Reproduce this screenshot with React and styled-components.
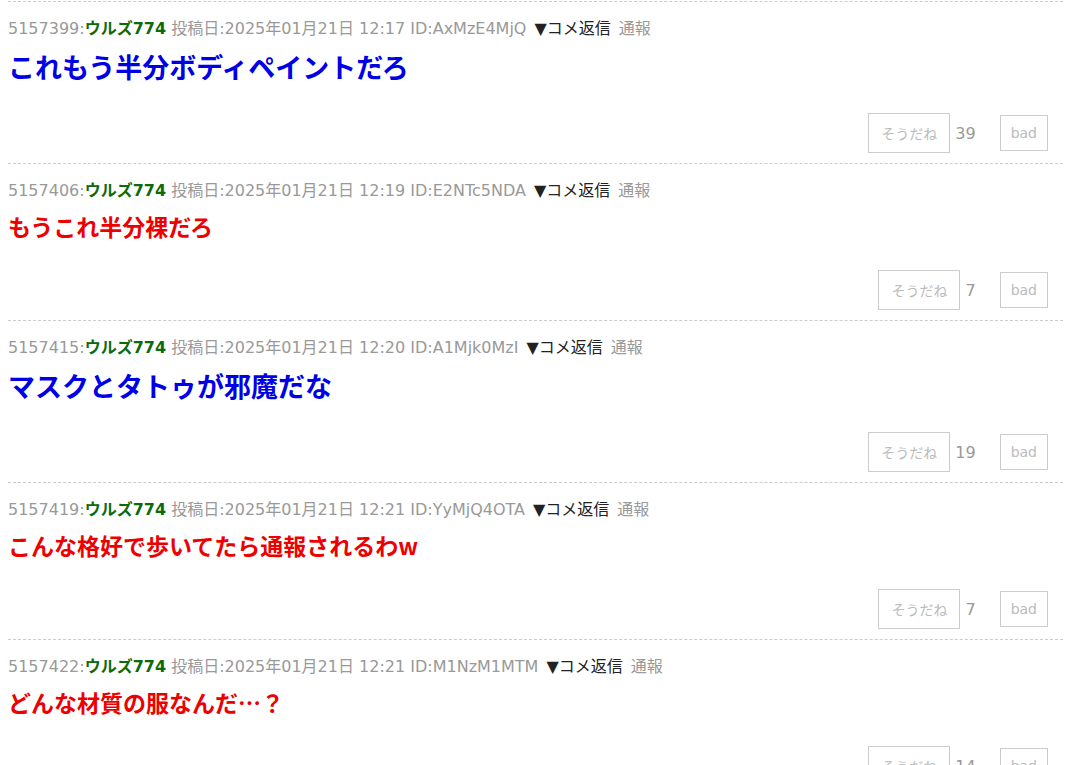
import styled, { createGlobalStyle } from "styled-components";

const GlobalStyle = createGlobalStyle`
    body {
        margin: 0;
        background: #fff;
        font-family: "DejaVu Sans", "Noto Sans CJK JP", sans-serif;
    }
`

const Thread = styled.div`
    width: 1055px;
    margin-left: 8px;
`

const Post = styled.div`
    border-top: 1px dashed #ccc;
    padding: 17px 0 9px;
    margin-top: 1px;
`

const Meta = styled.div`
    font-size: 16px;
    line-height: 20px;
    color: #999;
    white-space: nowrap;
    .name {
        color: #0b6b0b;
        font-weight: 700;
    }
    .reply {
        color: #222;
        margin: 0 8px 0 8px;
    }
`

const Body = styled.div`
    margin-top: 12px;
    font-family: "Noto Sans CJK JP", sans-serif;
    font-weight: 700;
    font-size: ${p => p.big ? "27px" : "23px"};
    line-height: ${p => p.big ? "31px" : "26px"};
    color: ${p => p.big ? "#0000e6" : "#ee0000"};
`

const Votes = styled.div`
    display: flex;
    justify-content: flex-end;
    align-items: center;
    margin-top: 31px;
    padding-right: 15px;
`

const VoteButton = styled.div`
    box-sizing: border-box;
    height: ${p => p.small ? "36px" : "40px"};
    padding: 0 ${p => p.small ? "10px" : "12px"};
    display: flex;
    align-items: center;
    border: 1px solid #ccc;
    color: #bbb;
    font-size: 14px;
`

const Count = styled.span`
    margin: 0 24px 0 5px;
    color: #999;
    font-size: 16px;
`

const posts = [
    { no: "5157399", time: "12:17", id: "AxMzE4MjQ", text: "これもう半分ボディペイントだろ", big: true, good: 39 },
    { no: "5157406", time: "12:19", id: "E2NTc5NDA", text: "もうこれ半分裸だろ", good: 7 },
    { no: "5157415", time: "12:20", id: "A1Mjk0MzI", text: "マスクとタトゥが邪魔だな", big: true, good: 19 },
    { no: "5157419", time: "12:21", id: "YyMjQ4OTA", text: "こんな格好で歩いてたら通報されるわw", good: 7 },
    { no: "5157422", time: "12:21", id: "M1NzM1MTM", text: "どんな材質の服なんだ…？", good: 14 },
]

export default function App() {
    return (
        <>
            <GlobalStyle />
            <Thread>
                {posts.map(p => (
                    <Post key={p.no}>
                        <Meta>
                            {p.no}:<span className="name">ウルズ774</span> 投稿日:2025年01月21日 {p.time} ID:{p.id}
                            <span className="reply">▼コメ返信</span>通報
                        </Meta>
                        <Body big={p.big}>{p.text}</Body>
                        <Votes>
                            <VoteButton>そうだね</VoteButton>
                            <Count>{p.good}</Count>
                            <VoteButton small>bad</VoteButton>
                        </Votes>
                    </Post>
                ))}
            </Thread>
        </>
    )
}
